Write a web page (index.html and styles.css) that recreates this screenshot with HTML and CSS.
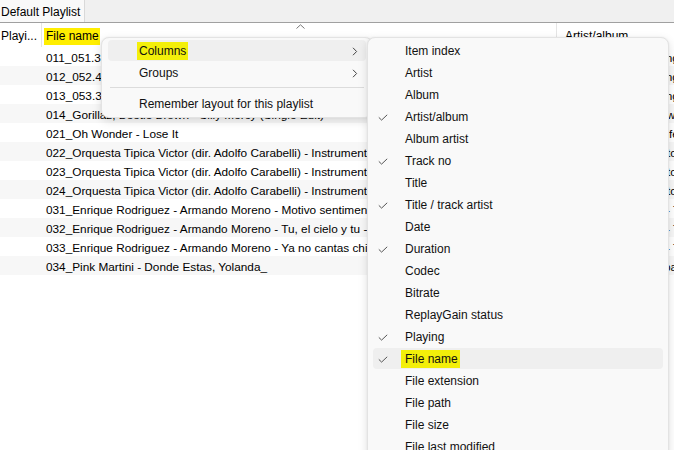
FILE: index.html
```html
<!DOCTYPE html>
<html>
<head>
<meta charset="utf-8">
<link rel="stylesheet" href="styles.css">
</head>
<body>
<div class="app">
  <div class="tabs">
    <div class="tab">Default Playlist</div>
  </div>
  <div class="list">
    <div class="header">
      <div class="c1">Playi...</div>
      <div class="c2"><span class="mark">File name</span>
        <svg class="sort" width="9" height="5" viewBox="0 0 9 5"><path d="M0.5 4.5 L4.5 0.8 L8.5 4.5" fill="none" stroke="#777" stroke-width="1"/></svg>
      </div>
      <div class="c3">Artist/album</div>
    </div>
    <div class="row"><div class="c1"></div><div class="c2">011_051.36</div><div class="c3">Various Artists - [Tango Collection]</div></div>
    <div class="row"><div class="c1"></div><div class="c2">012_052.40</div><div class="c3">Various Artists - [Tango Collection]</div></div>
    <div class="row"><div class="c1"></div><div class="c2">013_053.39</div><div class="c3">Various Artists - [Tango Collection]</div></div>
    <div class="row"><div class="c1"></div><div class="c2">014_Gorillaz, Beetle Brown - Silly Mercy (Single Edit)</div><div class="c3">Gorillaz, Beetle Brown - Silly Mercy</div></div>
    <div class="row"><div class="c1"></div><div class="c2">021_Oh Wonder - Lose It</div><div class="c3">Oh Wonder - [Ultralife]</div></div>
    <div class="row"><div class="c1"></div><div class="c2">022_Orquesta Tipica Victor (dir. Adolfo Carabelli) - Instrumental</div><div class="c3">Orquesta Tipica Victor</div></div>
    <div class="row"><div class="c1"></div><div class="c2">023_Orquesta Tipica Victor (dir. Adolfo Carabelli) - Instrumental</div><div class="c3">Orquesta Tipica Victor</div></div>
    <div class="row"><div class="c1"></div><div class="c2">024_Orquesta Tipica Victor (dir. Adolfo Carabelli) - Instrumental</div><div class="c3">Orquesta Tipica Victor</div></div>
    <div class="row"><div class="c1"></div><div class="c2">031_Enrique Rodriguez - Armando Moreno - Motivo sentimental</div><div class="c3">Enrique Rodriguez - T</div></div>
    <div class="row"><div class="c1"></div><div class="c2">032_Enrique Rodriguez - Armando Moreno - Tu, el cielo y tu - Vals</div><div class="c3">Enrique Rodriguez - T</div></div>
    <div class="row"><div class="c1"></div><div class="c2">033_Enrique Rodriguez - Armando Moreno - Ya no cantas chingolo</div><div class="c3">Enrique Rodriguez - T</div></div>
    <div class="row"><div class="c1"></div><div class="c2">034_Pink Martini - Donde Estas, Yolanda_</div><div class="c3">Pink Martini - [Sympathique]</div></div>
  </div>

  <div class="menu main-menu">
    <div class="item active"><span class="label"><span class="mark2">Columns</span></span>
      <svg class="chev" width="6" height="9" viewBox="0 0 6 9"><path d="M1 0.8 L4.6 4.5 L1 8.2" fill="none" stroke="#444" stroke-width="1"/></svg></div>
    <div class="item"><span class="label">Groups</span>
      <svg class="chev" width="6" height="9" viewBox="0 0 6 9"><path d="M1 0.8 L4.6 4.5 L1 8.2" fill="none" stroke="#444" stroke-width="1"/></svg></div>
    <div class="sep"></div>
    <div class="item"><span class="label">Remember layout for this playlist</span></div>
  </div>

  <div class="menu sub-menu">
    <div class="item"><span class="check"></span><span class="label">Item index</span></div>
    <div class="item"><span class="check"></span><span class="label">Artist</span></div>
    <div class="item"><span class="check"></span><span class="label">Album</span></div>
    <div class="item"><span class="check"><svg width="10" height="7" viewBox="0 0 10 7"><path d="M0.8 3.4 L3.6 6.1 L9.2 0.8" fill="none" stroke="#555" stroke-width="1"/></svg></span><span class="label">Artist/album</span></div>
    <div class="item"><span class="check"></span><span class="label">Album artist</span></div>
    <div class="item"><span class="check"><svg width="10" height="7" viewBox="0 0 10 7"><path d="M0.8 3.4 L3.6 6.1 L9.2 0.8" fill="none" stroke="#555" stroke-width="1"/></svg></span><span class="label">Track no</span></div>
    <div class="item"><span class="check"></span><span class="label">Title</span></div>
    <div class="item"><span class="check"><svg width="10" height="7" viewBox="0 0 10 7"><path d="M0.8 3.4 L3.6 6.1 L9.2 0.8" fill="none" stroke="#555" stroke-width="1"/></svg></span><span class="label">Title / track artist</span></div>
    <div class="item"><span class="check"></span><span class="label">Date</span></div>
    <div class="item"><span class="check"><svg width="10" height="7" viewBox="0 0 10 7"><path d="M0.8 3.4 L3.6 6.1 L9.2 0.8" fill="none" stroke="#555" stroke-width="1"/></svg></span><span class="label">Duration</span></div>
    <div class="item"><span class="check"></span><span class="label">Codec</span></div>
    <div class="item"><span class="check"></span><span class="label">Bitrate</span></div>
    <div class="item"><span class="check"></span><span class="label">ReplayGain status</span></div>
    <div class="item"><span class="check"><svg width="10" height="7" viewBox="0 0 10 7"><path d="M0.8 3.4 L3.6 6.1 L9.2 0.8" fill="none" stroke="#555" stroke-width="1"/></svg></span><span class="label">Playing</span></div>
    <div class="item active"><span class="check"><svg width="10" height="7" viewBox="0 0 10 7"><path d="M0.8 3.4 L3.6 6.1 L9.2 0.8" fill="none" stroke="#555" stroke-width="1"/></svg></span><span class="label"><span class="mark3">File name</span></span></div>
    <div class="item"><span class="check"></span><span class="label">File extension</span></div>
    <div class="item"><span class="check"></span><span class="label">File path</span></div>
    <div class="item"><span class="check"></span><span class="label">File size</span></div>
    <div class="item"><span class="check"></span><span class="label">File last modified</span></div>
  </div>
</div>
</body>
</html>
```

FILE: styles.css
```css
* { box-sizing: border-box; }
html, body { margin: 0; padding: 0; }
body {
  font-family: "Liberation Sans", Arial, sans-serif;
  font-size: 12px;
  color: #000;
  background: #fff;
}
.app {
  position: relative;
  width: 674px;
  height: 450px;
  overflow: hidden;
  background: #fff;
}
.tabs {
  height: 23px;
  background: #f0f0f0;
  border-bottom: 1px solid #a0a0a0;
  display: flex;
}
.tab {
  width: 85px;
  height: 22px;
  background: #f9f9f9;
  border-right: 1px solid #d9d9d9;
  line-height: 22px;
  padding-top: 1px;
  padding-left: 1px;
  white-space: nowrap;
  overflow: hidden;
}
.list { display: flex; flex-direction: column; }
.header {
  display: flex;
  height: 24px;
  align-items: stretch;
}
.header .c1, .header .c2, .header .c3 {
  line-height: 24px;
  padding-top: 1px;
  position: relative;
}
.header .c1 { border-right: 1px solid #e5e5e5; padding-left: 1px; }
.header .c2 { border-right: 1px solid #e5e5e5; padding-left: 2px; }
.c1 { width: 42px; flex: none; white-space: nowrap; overflow: hidden; }
.c2 { width: 515px; flex: none; white-space: nowrap; overflow: hidden; }
.c3 { flex: 1; white-space: nowrap; overflow: hidden; padding-left: 8px; }
.mark { background: #ffee00; padding: 1px 1px 2px 2px; }
.sort { position: absolute; top: 1px; left: 254px; }
.row {
  display: flex;
  height: 19px;
  line-height: 19px;
  font-size: 11.8px;
}
.row .c2, .row .c3 { padding-top: 2px; }
.row:nth-child(odd) { background: #f7f7f7; }
.row .c2 { padding-left: 4px; }
.menu {
  position: absolute;
  background: #f9f9f9;
  border: 1px solid #e3e3e3;
  border-radius: 8px;
  box-shadow: 0 3px 10px rgba(0,0,0,0.13), 0 0 2px rgba(0,0,0,0.06);
}
.main-menu {
  left: 101px;
  top: 37px;
  width: 272px;
  padding: 2px 6px 2px 6px;
}
.sub-menu {
  left: 367px;
  top: 37px;
  width: 302px;
  height: 440px;
  padding: 2px 5px;
}
.item {
  height: 21px;
  margin-bottom: 1px;
  border-radius: 4px;
  display: flex;
  align-items: center;
  padding-top: 1px;
  color: #111;
}
.item.active { background: #efefef; }
.main-menu .item { padding-left: 31px; padding-right: 5px; }
.main-menu .label { flex: 1; }
.chev { margin-right: 3px; }
.sep { height: 1px; background: #dcdcdc; margin: 4px 2px 5px 2px; }
.sub-menu .item { padding-left: 5px; }
.check { width: 27px; flex: none; display: flex; align-items: center; }
.check svg { display: block; margin-left: 0; }
.mark2 { background: #f3ef0a; padding: 2px 2px 2px 2px; margin-left: -2px; }
.mark3 { background: #f3ef0a; padding: 2px 2px 2px 4px; margin-left: -4px; }
```
